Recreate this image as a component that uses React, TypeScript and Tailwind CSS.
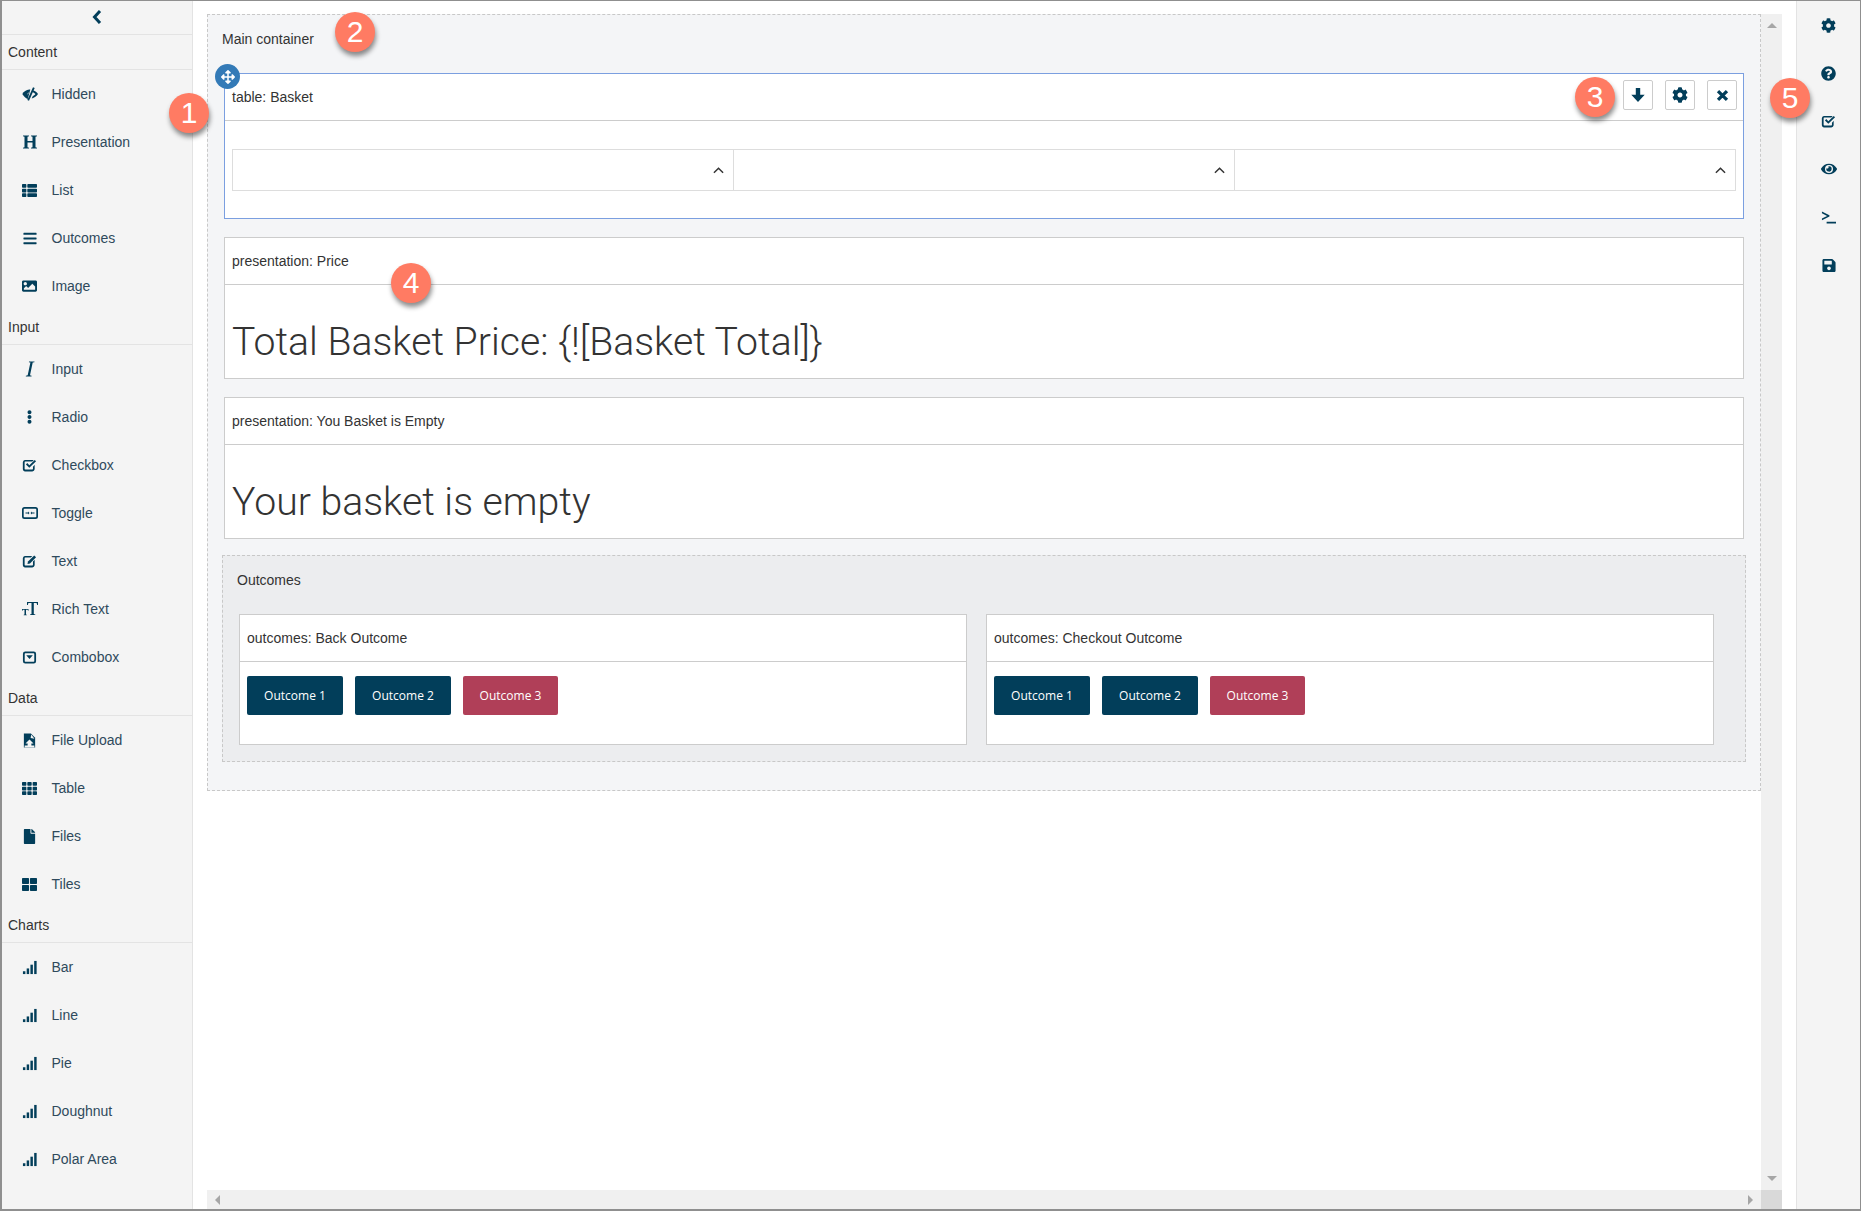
import React from 'react';
import {
  FaArrowsAlt,
  FaBars,
  FaCog,
  FaEllipsisV,
  FaEye,
  FaFile,
  FaImage,
  FaQuestionCircle,
  FaSave,
  FaTh,
  FaThLarge,
  FaThList,
} from 'react-icons/fa';

type IconProps = { className?: string };

// glyphs the icon packs don't have in this shape
const EyeClose = ({ className }: IconProps) => (
  <svg viewBox="0 0 16 16" className={className} fill="currentColor">
    <path d="M.3 8c1.500-2.400 3.900-4.200 7-4.500l1 .1L5.800 13C3.600 12.100 1.600 10.300.3 8Z" />
    <path d="M6.800 6.200 5.900 8.800C5.300 7.800 5.700 6.700 6.800 6.200Z" fill="#f4f4f4" />
    <path d="M11 1.200 12.700 2 7 14.800 5.300 14Z" />
    <path d="M11.300 4.300C13.200 5 14.900 6.300 16 8c-1.300 2.100-3.500 3.800-6.300 4.400l1-2.200c1.100-.4 2.100-1.200 2.700-2.200-.7-.9-1.600-1.600-2.800-2.100Z" />
  </svg>
);

const HeaderGlyph = ({ className }: IconProps) => (
  <svg viewBox="0 0 16 16" className={className} fill="currentColor">
    <path d="M1 1.500h6v.8L5.500 2.700V7h5V2.700L9 2.300v-.8h6v.8l-1.500.4v10.600l1.500.4v.8H9v-.8l1.500-.4V8.500h-5v4.800l1.500.4v.8H1v-.8l1.500-.4V2.700L1 2.300Z" />
  </svg>
);

const ItalicGlyph = ({ className }: IconProps) => (
  <svg viewBox="0 0 10 16" className={className} fill="currentColor">
    <path d="M4 .5h5.500l-.1.7-1.700.4L5 14.300l1.600.5-.1.7H.8l.1-.7 1.800-.5L5.400 1.600 3.900 1.200Z" />
  </svg>
);

const CheckGlyph = ({ className }: IconProps) => (
  <svg viewBox="0 0 16 16" className={className} fill="currentColor">
    <path d="M3 2h9.500L11 3.800H3.500a.7.7 0 0 0-.7.7v7a.7.7 0 0 0 .7.7h7.500a.7.7 0 0 0 .7-.7V9.300l1.800-2V12a3 3 0 0 1-2.500 2.500H3A2.800 2.800 0 0 1 .9 12V4.500A2.800 2.800 0 0 1 3 2Z" />
    <path d="M4.200 6.800 5.600 5.400 7.800 7.600 13.600 2 15 3.400 7.800 10.500Z" />
  </svg>
);

const EditGlyph = ({ className }: IconProps) => (
  <svg viewBox="0 0 16 16" className={className} fill="currentColor">
    <path d="M3 2h8L9.300 3.800H3.500a.7.700 0 0 0-.7.7v7a.7.700 0 0 0 .7.7h7.500a.7.700 0 0 0 .7-.7V8l1.800-1.800V12a3 3 0 0 1-2.500 2.500H3A2.800 2.800 0 0 1 .9 12V4.500A2.800 2.800 0 0 1 3 2Z" />
    <path d="M13 1.500 15 3.500 8.500 10 5.800 10.600 6.400 7.900Z" />
  </svg>
);

const ToggleGlyph = ({ className }: IconProps) => (
  <svg viewBox="0 0 16 16" className={className} fill="currentColor">
    <path fillRule="evenodd" d="M2.500 2h11A2.500 2.500 0 0 1 16 4.500v7a2.500 2.500 0 0 1-2.500 2.500h-11A2.500 2.500 0 0 1 0 11.500v-7A2.500 2.500 0 0 1 2.500 2Zm0 1.700a.8.800 0 0 0-.8.800v7a.8.800 0 0 0 .8.800h11a.8.800 0 0 0 .8-.8v-7a.8.800 0 0 0-.8-.8Z" />
    <path d="M3.500 7.500H6V6.500L7.500 8 6 9.500v-1H3.500ZM12.500 7.500H10V6.500L8.500 8 10 9.500v-1h2.500Z" />
  </svg>
);

const TextSizeGlyph = ({ className }: IconProps) => (
  <svg viewBox="0 0 16 16" className={className} fill="currentColor">
    <path d="M5 1h11v3h-.8l-.6-2H11.800v11l1.500.4V14H8v-.6l1.500-.4V2H6.400l-.6 2H5Z" />
    <path d="M0 8h6.500v1.800H6L5.700 8.800H4v4.700l.8.200v.5H1.700v-.5l.8-.2V8.800H.8L.5 9.800H0Z" />
  </svg>
);

const ComboGlyph = ({ className }: IconProps) => (
  <svg viewBox="0 0 16 16" className={className} fill="currentColor">
    <path fillRule="evenodd" d="M3.500 1.500h9A2.500 2.500 0 0 1 15 4v8a2.500 2.500 0 0 1-2.500 2.500h-9A2.500 2.500 0 0 1 1 12V4a2.500 2.500 0 0 1 2.500-2.500Zm0 2a.6.600 0 0 0-.6.500v8a.6.600 0 0 0 .6.500h9a.6.600 0 0 0 .6-.5V4a.6.600 0 0 0-.6-.5Z" />
    <path d="M4.500 5.500h7L8 9.500Z" />
  </svg>
);

const FileUploadGlyph = ({ className }: IconProps) => (
  <svg viewBox="0 0 16 16" className={className} fill="currentColor">
    <path d="M2 .5h7.500l4.500 4.500v10.500H2Z" />
    <path d="M9.800 1.500 9.200 5.300 13.300 6Z" fill="#f4f4f4" />
    <path d="M8 7l4.300 4.200H10v2h3.200v2.300H2.800v-2.300H6v-2H3.700Z" fill="#f4f4f4" />
    <path d="M7 12h2v2.500H7Z" fill="#f4f4f4" />
  </svg>
);

const SignalGlyph = ({ className }: IconProps) => (
  <svg viewBox="0 0 16 16" className={className} fill="currentColor">
    <rect x="1" y="12" width="2.600" height="3" />
    <rect x="5" y="9" width="2.600" height="6" />
    <rect x="9" y="5" width="2.600" height="10" />
    <rect x="13" y="1" width="2.600" height="14" />
  </svg>
);

const ConsoleGlyph = ({ className }: IconProps) => (
  <svg viewBox="0 0 16 16" className={className} fill="currentColor">
    <path d="M1 1.500 9 5.500 9 7 1 11V9l5.500-2.700L1 3.500ZM6 12.500h10V14.500H6Z" />
  </svg>
);

const ArrowDownGlyph = ({ className }: IconProps) => (
  <svg viewBox="0 0 16 16" className={className} fill="currentColor">
    <path d="M5.800 1h4.400v6.800h4.500L8 15 1.300 7.800h4.500Z" />
  </svg>
);

const CloseGlyph = ({ className }: IconProps) => (
  <svg viewBox="0 0 16 16" className={className} fill="none" stroke="currentColor" strokeWidth="4">
    <path d="M2.500 2.500 13.500 13.500M13.500 2.500 2.500 13.500" />
  </svg>
);

const BackGlyph = ({ className }: IconProps) => (
  <svg viewBox="0 0 10 14" className={className} fill="none" stroke="currentColor" strokeWidth="3">
    <path d="M8 1 2.500 7 8 13" />
  </svg>
);

const ChevronUp = () => (
  <svg viewBox="0 0 12 8" className="w-[11px] h-[8px]" fill="none" stroke="#333" strokeWidth="1.600">
    <path d="M1 7 6 2l5 5" />
  </svg>
);

type PaletteItem = { label: string; icon: React.ComponentType<IconProps>; size?: string };

const palette: { title: string; items: PaletteItem[] }[] = [
  {
    title: 'Content',
    items: [
      { label: 'Hidden', icon: EyeClose, size: 'w-[16px] h-[16px]' },
      { label: 'Presentation', icon: HeaderGlyph, size: 'w-[16px] h-[16px]' },
      { label: 'List', icon: FaThList, size: 'w-[15px] h-[15px]' },
      { label: 'Outcomes', icon: FaBars, size: 'w-[14px] h-[15px]' },
      { label: 'Image', icon: FaImage, size: 'w-[15px] h-[16px]' },
    ],
  },
  {
    title: 'Input',
    items: [
      { label: 'Input', icon: ItalicGlyph, size: 'w-[10px] h-[16px]' },
      { label: 'Radio', icon: FaEllipsisV, size: 'w-[13px] h-[14px]' },
      { label: 'Checkbox', icon: CheckGlyph, size: 'w-[15px] h-[15px]' },
      { label: 'Toggle', icon: ToggleGlyph, size: 'w-[16px] h-[16px]' },
      { label: 'Text', icon: EditGlyph, size: 'w-[15px] h-[15px]' },
      { label: 'Rich Text', icon: TextSizeGlyph, size: 'w-[16px] h-[16px]' },
      { label: 'Combobox', icon: ComboGlyph, size: 'w-[15px] h-[15px]' },
    ],
  },
  {
    title: 'Data',
    items: [
      { label: 'File Upload', icon: FileUploadGlyph, size: 'w-[15px] h-[15px]' },
      { label: 'Table', icon: FaTh, size: 'w-[15px] h-[15px]' },
      { label: 'Files', icon: FaFile, size: 'w-[13px] h-[15px]' },
      { label: 'Tiles', icon: FaThLarge, size: 'w-[15px] h-[15px]' },
    ],
  },
  {
    title: 'Charts',
    items: [
      { label: 'Bar', icon: SignalGlyph, size: 'w-[15px] h-[15px]' },
      { label: 'Line', icon: SignalGlyph, size: 'w-[15px] h-[15px]' },
      { label: 'Pie', icon: SignalGlyph, size: 'w-[15px] h-[15px]' },
      { label: 'Doughnut', icon: SignalGlyph, size: 'w-[15px] h-[15px]' },
      { label: 'Polar Area', icon: SignalGlyph, size: 'w-[15px] h-[15px]' },
    ],
  },
];

const rightTools = [
  { id: 'settings', icon: FaCog, size: 'w-[15px] h-[15px]' },
  { id: 'help', icon: FaQuestionCircle, size: 'w-[15px] h-[15px]' },
  { id: 'validate', icon: CheckGlyph, size: 'w-[15px] h-[15px]' },
  { id: 'preview', icon: FaEye, size: 'w-[16px] h-[16px]' },
  { id: 'console', icon: ConsoleGlyph, size: 'w-[15px] h-[15px]' },
  { id: 'save', icon: FaSave, size: 'w-[14px] h-[15px]' },
];

function Callout({ n, className }: { n: number; className: string }) {
  return (
    <div
      className={`absolute w-10 h-10 rounded-full bg-[#ff7b63] text-white text-[30px] leading-10 text-center shadow-[1px_4px_5px_rgba(0,0,0,0.45)] z-10 ${className}`}
    >
      {n}
    </div>
  );
}

function ToolButton({ children }: { children: React.ReactNode }) {
  return (
    <button className="w-[30px] h-[30px] flex items-center justify-center border border-[#cccccc] rounded-[2px] bg-white text-[#023e5a]">
      {children}
    </button>
  );
}

function PresentationBox({ title, text }: { title: string; text: string }) {
  return (
    <div className="bg-white border border-[#cccccc] h-[142px] mb-[18px]">
      <div className="h-[47px] flex items-center pl-[7px] border-b border-[#cccccc]">{title}</div>
      <div className="pl-[7px] pt-[35px] font-['Roboto',sans-serif] font-light text-[39.2px] leading-[44px] text-[#333333]">
        {text}
      </div>
    </div>
  );
}

function OutcomeCard({ title }: { title: string }) {
  return (
    <div className="bg-white border border-[#cccccc] h-[131px]">
      <div className="h-[47px] flex items-center pl-[7px] border-b border-[#cccccc]">{title}</div>
      <div className="flex gap-3 pl-[7px] pt-[14px] font-['Open_Sans',sans-serif] text-[12px] text-white">
        <div className="w-[96px] h-[39px] flex items-center justify-center rounded-[2px] bg-[#023e5a]">Outcome 1</div>
        <div className="w-[96px] h-[39px] flex items-center justify-center rounded-[2px] bg-[#023e5a]">Outcome 2</div>
        <div className="w-[95px] h-[39px] flex items-center justify-center rounded-[2px] bg-[#b03f58]">Outcome 3</div>
      </div>
    </div>
  );
}

export default function App() {
  return (
    <div className="relative w-[1861px] h-[1211px] flex overflow-hidden bg-white border-t border-l-2 border-b-2 border-r border-[#8f8f8f] font-['Liberation_Sans',Arial,sans-serif] text-[14px] text-[#333333]">
      {/* Left palette */}
      <aside className="w-[191px] shrink-0 bg-[#f4f4f4] border-r border-[#e3e3e3]">
        <div className="h-[34px] flex items-center justify-center pb-[2px] border-b border-[#e3e3e3] text-[#023e5a]">
          <BackGlyph className="w-[10px] h-[14px]" />
        </div>
        {palette.map((group) => (
          <div key={group.title}>
            <div className="h-[35px] flex items-center pl-[6px] border-b border-[#e3e3e3]">{group.title}</div>
            {group.items.map((item) => (
              <div key={item.label} className="h-12 flex items-center text-[#023e5a]">
                <div className="w-[50px] -ml-[0.5px] flex justify-center pl-[6px]">
                  <item.icon className={item.size} />
                </div>
                <span className="text-[#2f4a5c]">{item.label}</span>
              </div>
            ))}
          </div>
        ))}
      </aside>

      {/* Canvas */}
      <main className="flex-1 min-w-0 pl-[14px] pt-[13px] flex flex-col">
        <div className="flex-1 min-h-0 flex">
          <div className="flex-1 min-w-0">
            <div className="relative bg-[#f4f5f7] border border-dashed border-[#c8c8c8] h-[777px] pl-4 pr-4">
              <div className="h-[58px] -ml-[2px] pt-[14px] leading-[20px]">Main container</div>

              {/* Selected table */}
              <div className="relative bg-white border border-[#7b9fe0] h-[146px] mb-[18px]">
                <div className="absolute -left-[10px] -top-[10px] w-[25px] h-[25px] rounded-full bg-[#337ab7] text-white flex items-center justify-center">
                  <FaArrowsAlt className="w-[14px] h-[14px]" />
                </div>
                <div className="h-[47px] flex items-center justify-between pl-[7px] pr-[6px] border-b border-[#cccccc]">
                  <span>table: Basket</span>
                  <div className="flex gap-3 -mt-[4px]">
                    <ToolButton><ArrowDownGlyph className="w-[16px] h-[16px]" /></ToolButton>
                    <ToolButton><FaCog className="w-[16px] h-[16px]" /></ToolButton>
                    <ToolButton><CloseGlyph className="w-[13px] h-[13px]" /></ToolButton>
                  </div>
                </div>
                <div className="mx-[7px] mt-7 h-[42px] grid grid-cols-[501px_501px_1fr] border border-[#dddddd]">
                  <div className="flex items-center justify-end pr-[9px] border-r border-[#dddddd]"><ChevronUp /></div>
                  <div className="flex items-center justify-end pr-[9px] border-r border-[#dddddd]"><ChevronUp /></div>
                  <div className="flex items-center justify-end pr-[9px]"><ChevronUp /></div>
                </div>
              </div>

              <PresentationBox title="presentation: Price" text="Total Basket Price: {![Basket Total]}" />
              <PresentationBox title="presentation: You Basket is Empty" text="Your basket is empty" />

              {/* Outcomes */}
              <div className="-mx-[2px] -mt-[2px] h-[207px] bg-[#ecedef] border border-dashed border-[#c8c8c8] pl-4 pr-[31px]">
                <div className="h-[58px] -ml-[2px] pt-[14px] leading-[20px]">Outcomes</div>
                <div className="grid grid-cols-2 gap-[19px]">
                  <OutcomeCard title="outcomes: Back Outcome" />
                  <OutcomeCard title="outcomes: Checkout Outcome" />
                </div>
              </div>
            </div>
          </div>

          {/* Vertical scrollbar */}
          <div className="w-[21px] shrink-0 bg-[#f0f0f0] flex flex-col items-center justify-between py-[9px]">
            <div className="w-0 h-0 border-x-[5px] border-x-transparent border-b-[5px] border-b-[#a6a6a6]" />
            <div className="w-0 h-0 border-x-[5px] border-x-transparent border-t-[5px] border-t-[#a6a6a6]" />
          </div>
          <div className="w-[14px] shrink-0" />
        </div>

        {/* Horizontal scrollbar */}
        <div className="h-[19px] shrink-0 flex">
          <div className="flex-1 bg-[#f0f0f0] flex items-center justify-between px-[8px]">
            <div className="w-0 h-0 border-y-[5px] border-y-transparent border-r-[5px] border-r-[#a6a6a6]" />
            <div className="w-0 h-0 border-y-[5px] border-y-transparent border-l-[5px] border-l-[#a6a6a6]" />
          </div>
          <div className="w-[21px] bg-[#d9d9d9]" />
          <div className="w-[14px]" />
        </div>
      </main>

      {/* Right tools */}
      <aside className="w-[64px] shrink-0 bg-[#f4f4f4] border-l border-[#e3e3e3] text-[#023e5a]">
        {rightTools.map((tool) => (
          <div key={tool.id} className="h-12 flex items-center justify-center">
            <tool.icon className={tool.size} />
          </div>
        ))}
      </aside>

      <Callout n={1} className="left-[167px] top-[92px]" />
      <Callout n={2} className="left-[333px] top-[11px]" />
      <Callout n={3} className="left-[1573px] top-[76px]" />
      <Callout n={4} className="left-[389px] top-[262px]" />
      <Callout n={5} className="left-[1768px] top-[77px]" />
    </div>
  );
}
